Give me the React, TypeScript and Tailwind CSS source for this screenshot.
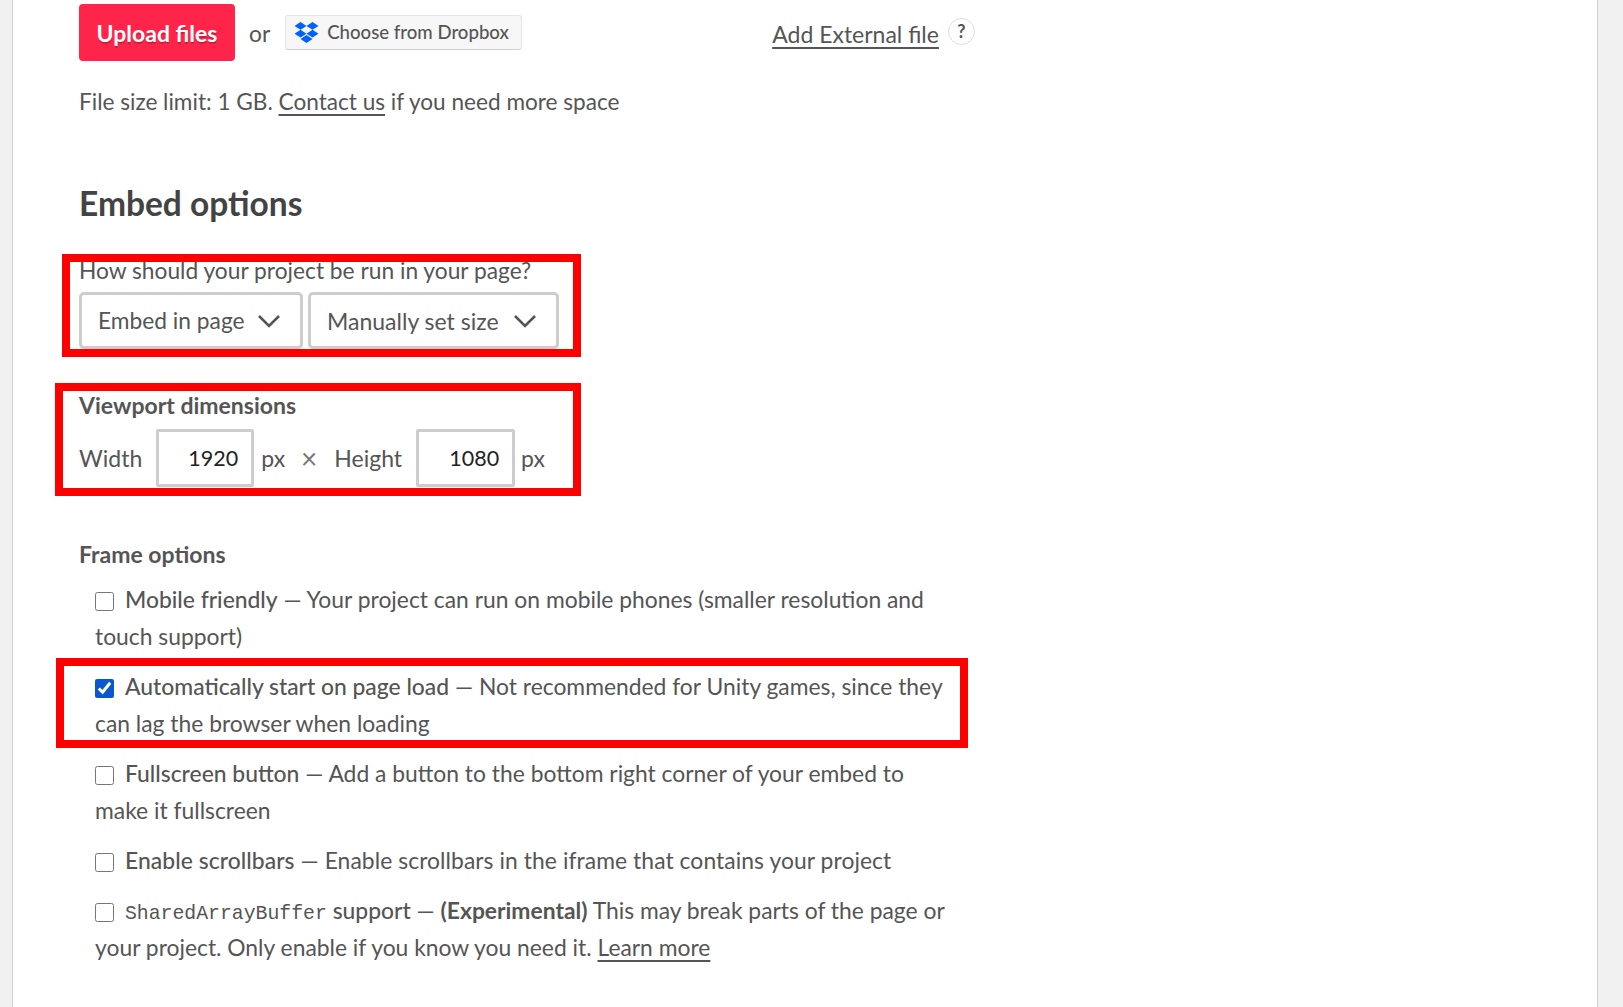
import React from "react";

function Dropbox() {
  return (
    <svg width="25" height="22" viewBox="0 0 24 22" fill="#0061ff" className="shrink-0">
      <path d="M6 0 0 3.9l6 3.9 6-3.9zM18 0l-6 3.9 6 3.9 6-3.9zM0 11.7l6 3.9 6-3.9-6-3.9zM18 7.8l-6 3.9 6 3.9 6-3.9zM6 17l6 3.9 6-3.9-6-3.9z" />
    </svg>
  );
}

function Chevron() {
  return (
    <svg width="22" height="14" viewBox="0 0 22 14" fill="none" stroke="#555" strokeWidth="2.6" className="shrink-0">
      <path d="M1 2l10 10L21 2" />
    </svg>
  );
}

function Select({ label, className }: { label: string; className: string }) {
  return (
    <div className={`flex h-[57px] items-center justify-between rounded-[5px] border-[3px] border-[#cdcdcd] bg-white pl-[16px] ${className}`}>
      <span>{label}</span>
      <Chevron />
    </div>
  );
}

function NumberBox({ value, className }: { value: string; className: string }) {
  return (
    <input
      readOnly
      value={value}
      className={`h-[58px] rounded-[2px] border-[3px] border-[#cdcdcd] bg-white pr-[13px] text-right text-[21.5px] text-[#222] outline-none ${className}`}
    />
  );
}

function Option({ checked, children, className }: { checked?: boolean; children: React.ReactNode; className?: string }) {
  return (
    <div className={`pl-4 text-[22.85px] ${className ?? "leading-[37px]"}`}>
      <input
        type="checkbox"
        readOnly
        checked={!!checked}
        className="mr-[11px] h-[19px] w-[19px] translate-y-[3px] accent-[#0b57d0]"
      />
      {children}
    </div>
  );
}

function Mark({ className }: { className: string }) {
  return <div className={`pointer-events-none absolute border-[8px] border-[#ff0000] ${className}`} />;
}

export default function App() {
  return (
    <div className="h-[1007px] overflow-hidden bg-[#f1f1f1] font-['Lato','Carlito','Liberation_Sans',sans-serif] text-[22.75px] text-[#555555]">
      <div className="relative ml-3 mr-[25px] h-full border-x border-[#cfcfcf] bg-white pl-[66px] pt-1">
        <div className="flex items-center whitespace-nowrap">
          <button className="h-[57px] w-[156px] shrink-0 rounded-[4px] bg-[#ff2449] pt-[2px] text-[23px] font-bold text-white [text-shadow:0_2px_0_rgba(0,0,0,0.2)]">
            Upload files
          </button>
          <span className="ml-[14px] mt-[3px]">or</span>
          <button className="ml-[15px] flex h-[35px] w-[237px] shrink-0 items-center gap-[8px] rounded-[3px] border border-[#e4e4e4] border-b-[#d0d0d0] bg-[#f7f7f7] pl-2 text-[18.6px] font-medium">
            <Dropbox />
            Choose from Dropbox
          </button>
          <span className="ml-[250px] mt-[3px] text-[23px] underline decoration-[2px] underline-offset-[4px]">Add External file</span>
          <span className="ml-[9px] flex h-[27px] w-[27px] shrink-0 -translate-y-[1px] items-center justify-center rounded-full border border-[#dedede] text-[18px] font-bold">?</span>
        </div>

        <p className="mt-[24px] text-[22.6px]">
          File size limit: 1 GB. <span className="underline underline-offset-[4px]">Contact us</span> if you need more space
        </p>

        <h2 className="mt-[61px] text-[33.5px] font-bold leading-[46px] text-[#434343]">Embed options</h2>

        <p className="mt-[27px] leading-[36px]">How should your project be run in your page?</p>
        <div className="mt-[3px] flex gap-[5px]">
          <Select label="Embed in page" className="w-[224px] pr-[20px] pt-[1px]" />
          <Select label="Manually set size" className="w-[251px] pr-[20px] pt-[1px] text-[23px]" />
        </div>

        <p className="mt-[38px] text-[23px] font-bold leading-[36px]">Viewport dimensions</p>
        <div className="mt-[6px] flex items-center text-[23px]">
          <span>Width</span>
          <NumberBox value="1920" className="ml-[14px] w-[98px]" />
          <span className="ml-[7px]">px</span>
          <span className="ml-[16px] text-[28px] leading-none text-[#777]">×</span>
          <span className="ml-[17px]">Height</span>
          <NumberBox value="1080" className="ml-[14px] w-[99px]" />
          <span className="ml-[6px]">px</span>
        </div>

        <p className="mt-[49px] text-[23px] font-bold leading-[36px]">Frame options</p>
        <div className="mt-[9px] flex w-[874px] flex-col gap-[13px]">
          <Option>
            <span className="font-medium">Mobile friendly</span> — Your project can run on mobile phones (smaller resolution and touch support)
          </Option>
          <Option checked>
            <span className="font-medium">Automatically start on page load</span> — Not recommended for Unity games, since they can lag the browser when loading
          </Option>
          <Option>
            <span className="font-medium">Fullscreen button</span> — Add a button to the bottom right corner of your embed to make it fullscreen
          </Option>
          <Option className="leading-[37px] tracking-[0.07px]">
            <span className="font-medium">Enable scrollbars</span> — Enable scrollbars in the iframe that contains your project
          </Option>
          <Option className="leading-[37.5px]">
            <code className="font-['Liberation_Mono',monospace] text-[19.8px] leading-none">SharedArrayBuffer</code>{" "}
            <span className="font-medium">support</span> — <b>(Experimental)</b> This may break parts of the page or your project. Only enable if you know you need it.{" "}
            <span className="underline underline-offset-[4px]">Learn more</span>
          </Option>
        </div>

        <Mark className="left-[49px] top-[254px] h-[103px] w-[519px]" />
        <Mark className="left-[42px] top-[383px] h-[113px] w-[526px]" />
        <Mark className="left-[43px] top-[658px] h-[90px] w-[912px]" />
      </div>
    </div>
  );
}
